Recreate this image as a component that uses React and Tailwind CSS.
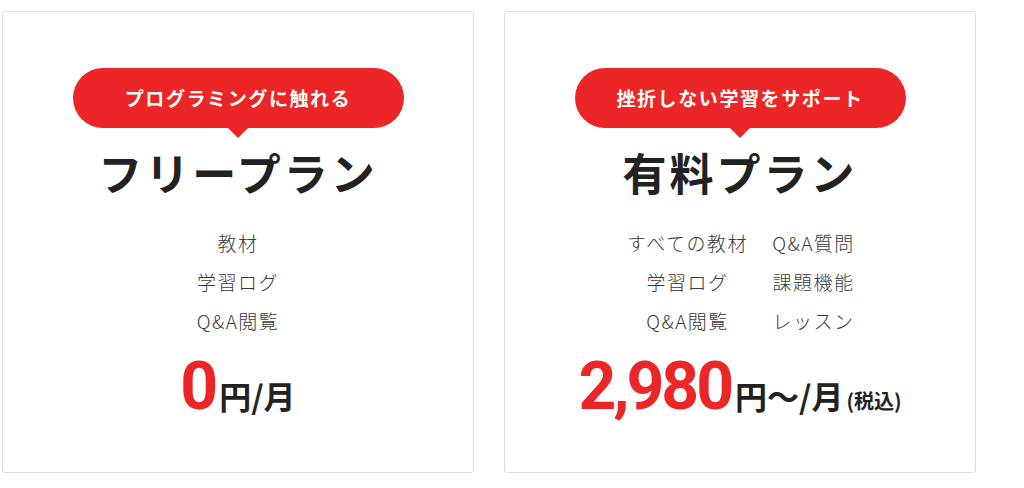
const jp = { fontFamily: '"Noto Sans CJK JP", "Noto Sans", sans-serif' }
const num = { fontFamily: 'Roboto, "Noto Sans", sans-serif' }

const plans = [
	{
		badge: "プログラミングに触れる",
		name: "フリープラン",
		features: [["教材"], ["学習ログ"], ["Q&A閲覧"]],
		price: "0",
		unit: "円/月",
		tax: null,
	},
	{
		badge: "挫折しない学習をサポート",
		name: "有料プラン",
		features: [["すべての教材", "Q&A質問"], ["学習ログ", "課題機能"], ["Q&A閲覧", "レッスン"]],
		price: "2,980",
		unit: "円～/月",
		tax: "(税込)",
	},
]

const PlanCard = ({ plan }) => {
	const twoCols = plan.features[0].length > 1

	return (
		<div className="w-[472px] h-[462px] shrink-0 bg-white border border-[#dedede] rounded-[3px] flex flex-col items-center">
			{/* badge */}
			<div className="relative mt-[56px] w-[331px] h-[60px] rounded-full bg-[#ec2627] flex items-center justify-center">
				<span className="text-white text-[19px] font-bold tracking-[1.6px]">{plan.badge}</span>
				<span className="absolute left-1/2 -translate-x-1/2 top-full w-0 h-0 border-l-[10px] border-r-[10px] border-t-[10px] border-l-transparent border-r-transparent border-t-[#ec2627]" />
			</div>

			<h2 className="mt-[16px] text-[44px] leading-[56px] font-bold text-[#222] tracking-[3px]">{plan.name}</h2>

			{/* features */}
			<ul className={twoCols ? "mt-[23px] ml-[21px] grid grid-cols-[126px_126px]" : "mt-[23px] flex flex-col items-center"}>
				{plan.features.flat().map((f) => (
					<li key={f} className="text-center text-[19px] leading-[39px] font-light tracking-[1.5px] text-[#3a3a3a]">{f}</li>
				))}
			</ul>

			{/* price */}
			<div className="mt-[12px] flex items-baseline">
				<span className="text-[#ec2627] text-[66px] leading-[70px] font-bold tracking-[-3px] mr-[4px]" style={num}>{plan.price}</span>
				<span className="text-[#222] text-[32px] font-bold">{plan.unit}</span>
				{plan.tax && <span className="ml-[3px] text-[#222] text-[20px] font-bold">{plan.tax}</span>}
			</div>
		</div>
	)
}

const App = () => {
	return (
		<div className="w-[1024px] h-[488px] bg-white pt-[11px] pl-[2px] flex gap-[30px]" style={jp}>
			{plans.map((plan) => (
				<PlanCard key={plan.name} plan={plan} />
			))}
		</div>
	)
}

export default App
